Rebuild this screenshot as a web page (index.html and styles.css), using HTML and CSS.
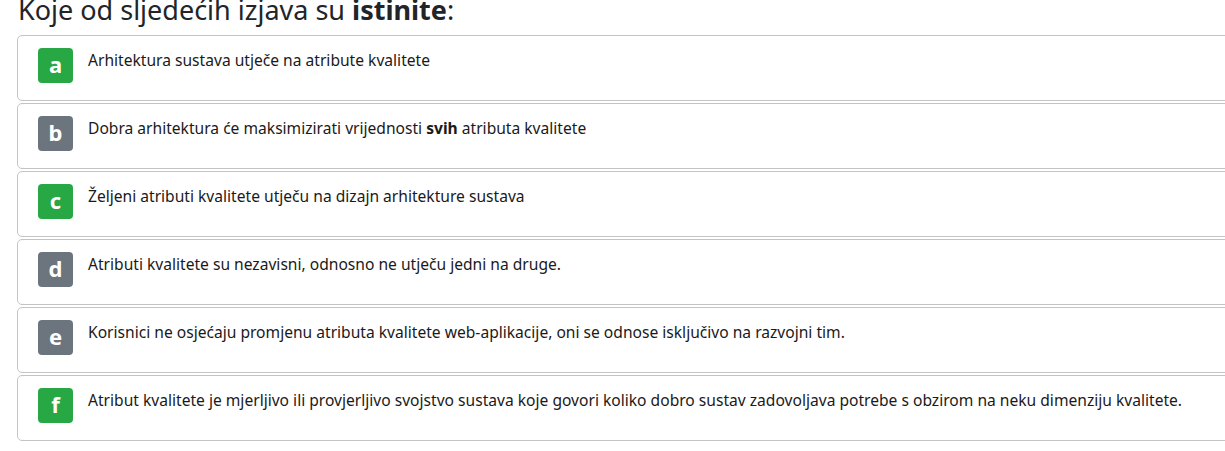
FILE: index.html
```html
<!DOCTYPE html>
<html lang="hr">
<head>
<meta charset="utf-8">
<title>Pitanje</title>
<link rel="stylesheet" href="styles.css">
</head>
<body>
<div class="page">
  <h2 class="question">Koje od sljedećih izjava su <strong>istinite</strong>:</h2>
  <ul class="answers">
    <li class="answer"><span class="badge ok">a</span><span class="text">Arhitektura sustava utječe na atribute kvalitete</span></li>
    <li class="answer"><span class="badge no">b</span><span class="text">Dobra arhitektura će maksimizirati vrijednosti <strong>svih</strong> atributa kvalitete</span></li>
    <li class="answer"><span class="badge ok">c</span><span class="text">Željeni atributi kvalitete utječu na dizajn arhitekture sustava</span></li>
    <li class="answer"><span class="badge no">d</span><span class="text">Atributi kvalitete su nezavisni, odnosno ne utječu jedni na druge.</span></li>
    <li class="answer"><span class="badge no">e</span><span class="text">Korisnici ne osjećaju promjenu atributa kvalitete web-aplikacije, oni se odnose isključivo na razvojni tim.</span></li>
    <li class="answer"><span class="badge ok">f</span><span class="text">Atribut kvalitete je mjerljivo ili provjerljivo svojstvo sustava koje govori koliko dobro sustav zadovoljava potrebe s obzirom na neku dimenziju kvalitete.</span></li>
  </ul>
</div>
</body>
</html>
```
FILE: styles.css
```css
html, body {
  margin: 0;
  padding: 0;
  background: #fff;
  overflow: hidden;
}
body {
  font-family: "Noto Sans", "Open Sans", sans-serif;
  color: #212529;
}
.page {
  padding-left: 17px;
  width: 1230px;
}
.question {
  margin: -8px 0 0 1px;
  font-size: 27px;
  font-weight: 400;
  line-height: 36px;
  height: 43px;
  color: #212529;
}
.question strong {
  font-weight: 700;
}
.answers {
  list-style: none;
  margin: 0;
  padding: 0;
}
.answer {
  box-sizing: border-box;
  height: 66px;
  margin-bottom: 2px;
  border: 1px solid #c4c4c4;
  border-radius: 5px;
  padding: 12px 20px;
  display: flex;
  align-items: flex-start;
  gap: 15px;
}
.badge {
  flex: none;
  width: 35px;
  height: 35px;
  border-radius: 4px;
  color: #fff;
  font-weight: 700;
  font-size: 22px;
  line-height: 33px;
  text-align: center;
}
.badge.ok { background: #28a745; }
.badge.no { background: #6c757d; }
.text {
  font-size: 15.6px;
  line-height: 24px;
  color: #1a1a1a;
}
.text strong { font-weight: 700; }
```
